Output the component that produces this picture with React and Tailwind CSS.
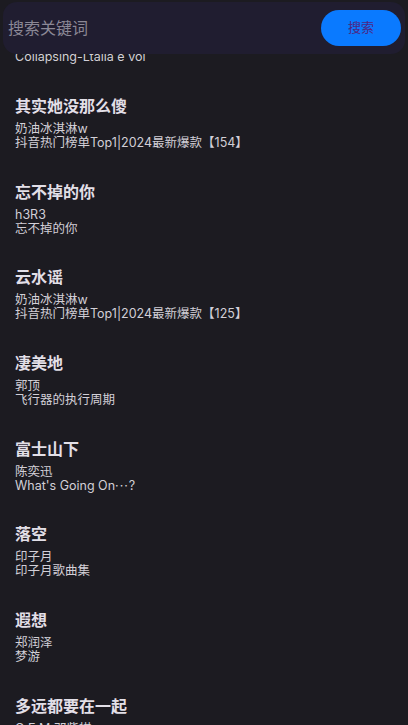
import React from "react";

const songs = [
  { title: "Collapsing", artist: "Ltalia e voi", album: "Collapsing-Ltalia e voi" },
  { title: "其实她没那么傻", artist: "奶油冰淇淋w", album: "抖音热门榜单Top1|2024最新爆款【154】" },
  { title: "忘不掉的你", artist: "h3R3", album: "忘不掉的你" },
  { title: "云水谣", artist: "奶油冰淇淋w", album: "抖音热门榜单Top1|2024最新爆款【125】" },
  { title: "凄美地", artist: "郭顶", album: "飞行器的执行周期" },
  {
    title: "富士山下",
    artist: "陈奕迅",
    album: (
      <>
        What's Going On<span className="tracking-[1px]">···</span>?
      </>
    ),
  },
  { title: "落空", artist: "印子月", album: "印子月歌曲集" },
  { title: "遐想", artist: "郑润泽", album: "梦游" },
  { title: "多远都要在一起", artist: "G.E.M.邓紫棋", album: "新的心跳" },
];

export default function App() {
  return (
    <div className="relative h-[725px] w-full overflow-hidden bg-[#1c1b21] font-['Inter','Noto_Sans_CJK_SC',sans-serif]">
      {/* Search bar */}
      <div className="absolute left-[3px] right-[3px] top-[2px] z-10 flex h-[52px] items-center justify-between rounded-[14px] bg-[#201d30] pl-[5px] pr-[4px]">
        <span className="text-[16px] text-[#8b8896]">搜索关键词</span>
        <button className="h-[36px] w-[80px] rounded-full bg-[#0a7aff] text-[13px] text-[#4e2784]">
          搜索
        </button>
      </div>

      {/* Song list */}
      <div className="mt-[-7.7px] flex flex-col">
        {songs.map((s, i) => (
          <div key={i} className="h-[85.7px] shrink-0 pl-[15px] pt-[12px]">
            <div className="text-[16px] font-bold leading-[32px] text-[#e2dfe7]">{s.title}</div>
            <div className="text-[12.5px] leading-[14px] text-[#d2cfd7]">{s.artist}</div>
            <div className="text-[12.5px] leading-[14px] text-[#d2cfd7]">{s.album}</div>
          </div>
        ))}
      </div>
    </div>
  );
}
